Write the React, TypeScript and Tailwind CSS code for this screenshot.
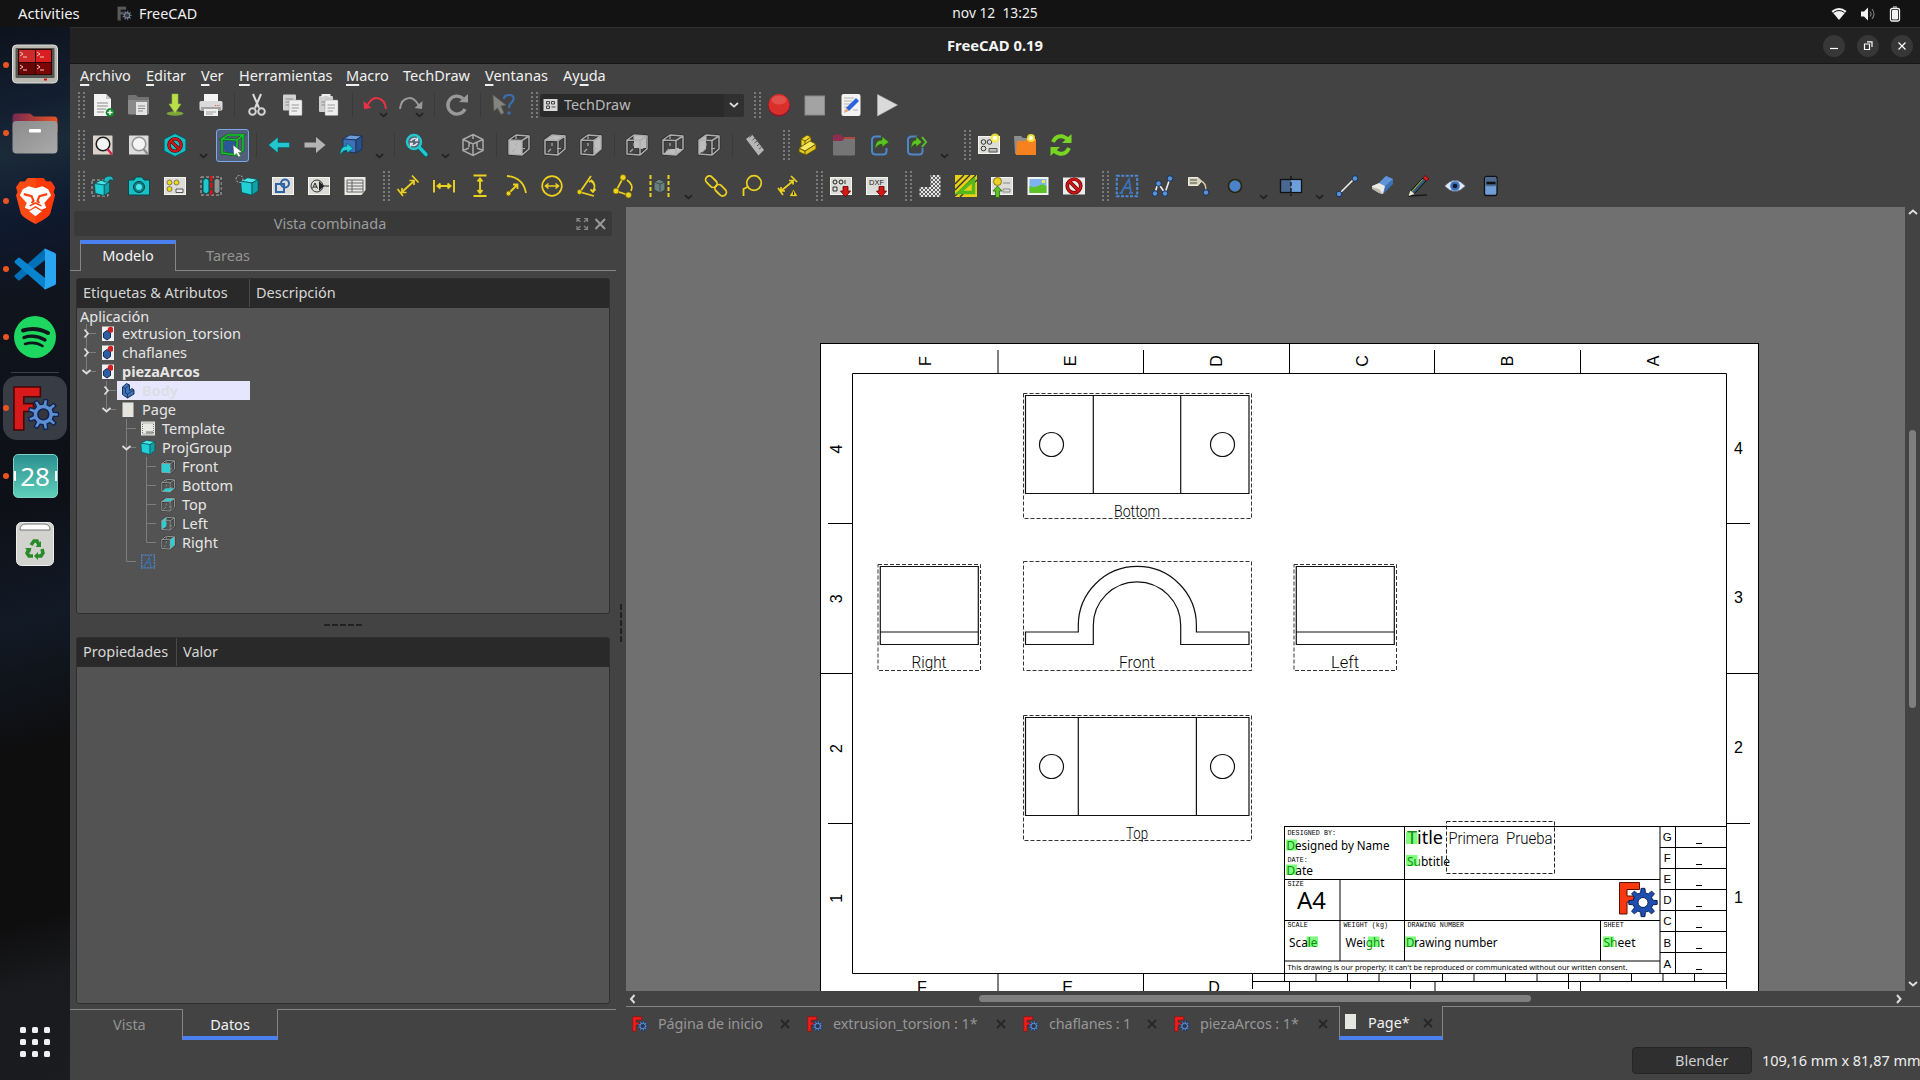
import React from "react";

type P = { children?: React.ReactNode };

/* ---------- shared drawing helpers ---------- */

function gearPath(cx: number, cy: number, r: number, R: number, teeth: number) {
  const pts: string[] = [];
  const step = (Math.PI * 2) / teeth;
  for (let i = 0; i < teeth; i++) {
    const a = i * step;
    const spots: [number, number][] = [
      [-0.3, r],
      [-0.17, R],
      [0.17, R],
      [0.3, r],
    ];
    for (const [o, q] of spots) {
      const t = a + o * step;
      pts.push(`${(cx + q * Math.cos(t)).toFixed(2)} ${(cy + q * Math.sin(t)).toFixed(2)}`);
    }
  }
  return "M" + pts.join("L") + "Z";
}

const FreeCadMark = ({ className, red = "#d81a1a", blue = "#5b8fd0", edge = "#4a0505" }: { className: string; red?: string; blue?: string; edge?: string }) => (
  <svg viewBox="0 0 48 48" className={className}>
    <path d="M2 2H29V12H12V19H22V27H12V46H2Z" fill={red} stroke={edge} strokeWidth="1.600" />
    <path d={gearPath(32, 30, 10.5, 15.5, 9)} fill={blue} stroke="#10204f" strokeWidth="1.400" />
    <circle cx="32" cy="30" r="5.500" fill="#35373c" stroke="#10204f" strokeWidth="1.600" />
  </svg>
);

const S = ({ children }: P) => (
  <svg viewBox="0 0 24 24" className="h-6 w-6 overflow-visible" fill="none">
    {children}
  </svg>
);

const Chev = () => (
  <svg viewBox="0 0 10 6" className="h-[6px] w-[9px]" fill="none">
    <path d="M1 1L5 4.600L9 1" stroke="#222" strokeWidth="1.900" />
  </svg>
);

/* ---------- cube family ---------- */

const cubeFaces: Record<string, string> = {
  front: "M2 7H15V22L2 21Z",
  top: "M2 7L9 2H22L15 7Z",
  right: "M15 7L22 2V16L15 22Z",
  rear: "M9 3H21V15H9Z",
  bottom: "M2 21L9 16H22L15 22Z",
  left: "M2 7L9 2V16L2 21Z",
};

const Cube = ({ face, line = "#adadad", fill = "#bdbdbd" }: { face: string; line?: string; fill?: string }) => (
  <>
    <path d="M2 7L15 7.500V22L2 21ZM2 7L9 2L22 3L15 7.500M22 3V16L15 22" stroke="#2e2e2e" strokeWidth="2.800" strokeLinejoin="round" />
    <path d={cubeFaces[face]} fill={fill} />
    <path d="M9 3V6M9 10V13M8 16L5 19M14 15.500H18" stroke={line} strokeWidth="1.200" />
    <path d="M2 7L15 7.500V22L2 21ZM2 7L9 2L22 3L15 7.500M22 3V16L15 22" stroke={line} strokeWidth="1.500" strokeLinejoin="round" />
  </>
);

const TealCube = ({ x = 0, y = 0, s = 1 }: { x?: number; y?: number; s?: number }) => (
  <g transform={`translate(${x} ${y}) scale(${s})`} stroke="#06484c" strokeWidth="0.800" strokeLinejoin="round">
    <path d="M2 6L10 2L22 4L15 8Z" fill="#4ae6ea" />
    <path d="M2 6L15 8V22L3 19Z" fill="#20d0d6" />
    <path d="M15 8L22 4V17L15 22Z" fill="#0ea2a8" />
  </g>
);

const Sheet = ({ children }: P) => (
  <>
    <rect x="1.500" y="3.500" width="21" height="17" fill="#dcdcd8" stroke="#f3f3f0" strokeWidth="1" />
    {children}
  </>
);

const Banned = () => (
  <>
    <circle cx="12" cy="12" r="7.500" stroke="#4a0000" strokeWidth="4" />
    <path d="M7 7L17 17" stroke="#4a0000" strokeWidth="4" />
    <circle cx="12" cy="12" r="7.500" stroke="#d31414" strokeWidth="2.600" />
    <path d="M6.800 6.800L17.200 17.200" stroke="#d31414" strokeWidth="2.600" />
  </>
);

const Y = "#ecd11f";
const Dot = ({ x, y, r = 2.4 }: { x: number; y: number; r?: number }) => <circle cx={x} cy={y} r={r} fill={Y} stroke="#5c4f05" strokeWidth="0.600" />;
const BDot = ({ x, y, r = 2.8 }: { x: number; y: number; r?: number }) => <circle cx={x} cy={y} r={r} fill="#5890d4" stroke="#15315c" strokeWidth="1" />;

const Magnifier = ({ c, h, bg }: { c: string; h: string; bg: string }) => (
  <>
    <rect x="2" y="2.500" width="19.500" height="19" rx="0.500" fill={bg} />
    <circle cx="12" cy="11" r="6.800" fill="#f4f4f4" stroke={c} strokeWidth="1.500" />
    <path d="M16.500 16L21 21.500" stroke={h} strokeWidth="2.400" />
  </>
);

const Dxf = ({ children }: P) => (
  <>
    <Sheet>{children}</Sheet>
    <path d="M14 12.500H19V17H21.500L16.500 23L11.500 17H14Z" fill="#d41717" stroke="#5c0000" strokeWidth="0.800" />
  </>
);

const Exchange = () => <path d="M13 3.500H8Q4 3.500 4 7V18Q4 21.500 8 21.500H15Q18.500 21.500 18.500 18V15" stroke="#4d87c9" strokeWidth="2" />;

const icons: Record<string, React.ReactNode> = {
  newdoc: (
    <>
      <path d="M4 1H15L20 6V23H3V1Z" fill="#f2f2f2" />
      <path d="M15 1V6H20Z" fill="#c4c4c4" />
      <path d="M6 10H17M6 13H17M6 16H15M6 19H13" stroke="#8c8c8c" strokeWidth="1" />
      <circle cx="19" cy="19.500" r="4.300" fill="#13862c" />
      <path d="M19 17V22M16.500 19.500H21.500" stroke="#fff" strokeWidth="1.300" />
    </>
  ),
  open: (
    <>
      <path d="M1 3Q1 2 2 2H9L11 4H21Q22 4 22 5V20Q22 21 21 21H2Q1 21 1 20Z" fill="#727272" />
      <path d="M1 7H22V20Q22 21.500 20.500 21.500H2.500Q1 21.500 1 20Z" fill="#8a8a8a" />
      <path d="M9 9H20V22H9Z" fill="#e4e4e4" />
      <path d="M11 13H18M11 15.500H18M11 18H16" stroke="#8c8c8c" />
    </>
  ),
  save: (
    <>
      <ellipse cx="12" cy="20.500" rx="8.500" ry="2.200" fill="#7da53a" />
      <path d="M9 1H15V11H18L12 20L6 11H9Z" fill="#b9e04a" stroke="#95bb33" strokeWidth="0.600" />
    </>
  ),
  print: (
    <>
      <path d="M5 1H19V9H5Z" fill="#f4f4f4" />
      <rect x="0.500" y="8" width="23" height="9.500" rx="1.500" fill="#dadada" />
      <path d="M2 14H22V18H2Z" fill="#a3a3a3" />
      <path d="M5 16H19V23H5Z" fill="#f1f1f1" />
      <path d="M7 19H17M7 21H14" stroke="#9c9c9c" />
      <path d="M16 12.500H21" stroke="#d55" strokeDasharray="1.200 1" />
    </>
  ),
  cut: (
    <>
      <path d="M8 1L14 15M16 1L10 15" stroke="#dcdcdc" strokeWidth="2" />
      <circle cx="7.500" cy="18.500" r="3.300" stroke="#d4d4d4" strokeWidth="2" />
      <circle cx="16.500" cy="18.500" r="3.300" stroke="#d4d4d4" strokeWidth="2" />
    </>
  ),
  copy: (
    <>
      <rect x="2" y="1.500" width="13" height="16" rx="1" fill="#d2d2d2" />
      <path d="M4.500 6H12M4.500 9H8M4.500 12H8" stroke="#8d8d8d" />
      <rect x="8" y="7" width="13" height="15.500" rx="1" fill="#efefef" stroke="#999" strokeWidth="0.500" />
      <path d="M10.500 12H18M10.500 15H18M10.500 18H16" stroke="#9a9a9a" />
    </>
  ),
  paste: (
    <>
      <rect x="2" y="3" width="14" height="16" rx="1" fill="#cfcfcf" />
      <path d="M5.500 4V2H12.500V4" stroke="#eee" strokeWidth="2" />
      <path d="M4.500 9H8M4.500 12H8" stroke="#8d8d8d" />
      <rect x="8" y="7" width="13" height="15.500" rx="1" fill="#efefef" stroke="#999" strokeWidth="0.500" />
      <path d="M10.500 12H18M10.500 15H18M10.500 18H16" stroke="#9a9a9a" />
    </>
  ),
  undo: (
    <>
      <path d="M4.500 12Q9 4 14 5Q22 6 23 16" stroke="#e93246" strokeWidth="2" />
      <path d="M0.500 8L1 16L8.500 15Z" fill="#e93246" />
    </>
  ),
  redo: (
    <>
      <path d="M19.500 12Q15 4 10 5Q2 6 1 16" stroke="#9a9a9a" strokeWidth="2" />
      <path d="M23.500 8L23 16L15.500 15Z" fill="#9a9a9a" />
    </>
  ),
  refresh: (
    <>
      <path d="M20 16A9 9 0 1 1 18 5.500" stroke="#999" strokeWidth="3.400" />
      <path d="M14 9L23 9.500V1Z" fill="#999" />
    </>
  ),
  whats: (
    <>
      <path d="M2 2L15 12L10 13L13 20L10 21.500L6.500 15L3 18Z" fill="#858580" stroke="#5c5c58" strokeWidth="0.800" />
      <path d="M13 6Q13 2 18 2Q23 2 22.500 6Q22 9 19.500 10.500Q18 12 18 15" stroke="#3a6fae" strokeWidth="2.200" />
      <circle cx="18" cy="20" r="1.700" fill="#3a6fae" />
    </>
  ),
  record: (
    <>
      <circle cx="12" cy="12.500" r="11" fill="#8d1532" />
      <circle cx="12" cy="11.500" r="10.500" fill="#d9302c" />
      <ellipse cx="12" cy="7" rx="7.500" ry="4.500" fill="#ec6b63" opacity="0.500" />
    </>
  ),
  stop: <rect x="2" y="3" width="19.500" height="19" fill="#a3a3a3" stroke="#8a8a8a" />,
  edit: (
    <>
      <rect x="2.500" y="1" width="19" height="22" rx="2" fill="#f3f3f3" />
      <path d="M5 5H15M5 8H13M5 11H12M5 14H9M14 17H19M5 18H8" stroke="#b7b0a6" />
      <path d="M17 5L20 8L10 18L7 15Z" fill="#2c62dd" />
      <path d="M7 15L10 18L5 20Z" fill="#e3a97a" />
    </>
  ),
  play: <path d="M2.500 1.500L22.500 12L2.500 23Z" fill="#dadada" stroke="#bcbcbc" strokeWidth="0.500" />,
  fitall: <Magnifier c="#1c1c1c" h="#d6274a" bg="#d9d3ca" />,
  fitsel: <Magnifier c="#949494" h="#8e8e8e" bg="#dcdcdc" />,
  drawstyle: (
    <>
      <path d="M12 0.500L23 6V18L12 23.500L1 18V6Z" fill="#18bcc4" stroke="#07575c" />
      <g transform="translate(2.200 2.200) scale(0.820)">
        <Banned />
      </g>
    </>
  ),
  bbox: (
    <>
      <circle cx="11" cy="13" r="7.500" fill="#2c5796" />
      <path d="M2 6L8 2H23L17 7ZM2 6V20L17 22V7M23 2V17L17 22" stroke="#0a5c14" strokeWidth="2.600" />
      <path d="M2 6L8 2H23L17 7ZM2 6V20L17 22V7M23 2V17L17 22" stroke="#16c92c" strokeWidth="1.500" />
      <path d="M13 12L22 19L18.500 19.500L20.500 23L18.500 24L16.500 20.500L14 22.500Z" fill="#fff" stroke="#555" strokeWidth="0.500" />
    </>
  ),
  left: <path d="M1.500 12L11 4V9.500H22.500V14.500H11V20Z" fill="#21c7cd" stroke="#07575c" strokeWidth="0.500" />,
  right: <path d="M22.500 12L13 4V9.500H1.500V14.500H13V20Z" fill="#b4b4b4" />,
  linkview: (
    <>
      <path d="M4 6L11 2L23 3L17 7Z" fill="#6c9bd6" stroke="#122d55" strokeWidth="0.800" />
      <path d="M4 6L17 7V20L4 18Z" fill="#3d70b5" stroke="#122d55" strokeWidth="0.800" />
      <path d="M17 7L23 3V16L17 20Z" fill="#28508a" stroke="#122d55" strokeWidth="0.800" />
      <path d="M1 22Q1 13 8 13V10L14 15.500L8 20V17Q4 17 1 22Z" fill="#20d0d6" stroke="#07575c" strokeWidth="0.600" />
    </>
  ),
  search: (
    <>
      <path d="M14 14L21 21.500" stroke="#07575c" strokeWidth="5" strokeLinecap="round" />
      <path d="M14 14L21 21.500" stroke="#20c8ce" strokeWidth="3.400" strokeLinecap="round" />
      <circle cx="9" cy="9" r="7" fill="#567" stroke="#20c8ce" strokeWidth="2.400" />
      <path d="M5.500 8Q9 3.500 12.500 7M12.500 10Q9 14.500 5.500 11M12.500 4.500V7.500H10M5.500 13.500V10.500H8" stroke="#e6e6e6" strokeWidth="1.300" />
    </>
  ),
  iso: (
    <path d="M12 1.500L22 6.500V17.500L12 22.500L2 17.500V6.500ZM2 6.500L12 11L22 6.500M12 11V22.500M12 1.500V6M2 17.500L8 15M22 17.500L16 15M8 10V14M16 10V14" stroke="#a9a9a9" strokeWidth="1.500" />
  ),
  front: <Cube face="front" />,
  top: <Cube face="top" />,
  rightv: <Cube face="right" />,
  rear: <Cube face="rear" />,
  bottom: <Cube face="bottom" />,
  leftv: <Cube face="left" />,
  ruler: (
    <>
      <path d="M3 6L9 1.500L21 17L15.500 22.500Z" fill="#b5b5b5" />
      <path d="M9 2L6.500 4.500M12 5L9.500 7M14 8L11.500 10M16.500 11L14 13M18.500 14L16 16" stroke="#555" />
    </>
  ),
  part: (
    <g stroke="#5f5003" strokeWidth="0.900" strokeLinejoin="round">
      <path d="M5 6L11 2L15 4V11L9 15L5 13Z" fill="#edd32a" />
      <path d="M5 6L9 8L15 4M9 8V15" />
      <path d="M3 15L9 18L20 11V16L10 22L3 19Z" fill="#e2c61e" />
      <path d="M3 15L14 8L20 11L9 18Z" fill="#f9e85c" />
      <path d="M9 18V22" />
    </g>
  ),
  folder: (
    <>
      <path d="M1 3Q1 1.500 2.500 1.500H9L11 4H21Q23 4 23 6V10H1Z" fill="#8f2d4f" />
      <path d="M12 4H23V8H12Z" fill="#b5483d" />
      <path d="M1 8H10L12 6H23V21Q23 22.500 21.500 22.500H2.500Q1 22.500 1 21Z" fill="#757575" />
    </>
  ),
  link: (
    <>
      <Exchange />
      <path d="M7 16Q7 7 14 7V3.500L21 9L14 14V11Q10 11 7 16Z" fill="#5cc226" stroke="#235a05" strokeWidth="0.600" />
    </>
  ),
  links: (
    <>
      <Exchange />
      <path d="M7 16Q7 7 12 7V3.500L18 9L12 14V11Q9 11 7 16Z" fill="#5cc226" stroke="#235a05" strokeWidth="0.600" />
      <path d="M18 4L22 9L18 14" stroke="#5cc226" strokeWidth="2" />
    </>
  ),
  page: (
    <>
      <Sheet>
        <circle cx="6.500" cy="9" r="2.300" stroke="#333" />
        <circle cx="12.500" cy="9" r="2.300" stroke="#333" />
        <circle cx="6.500" cy="15.500" r="2.300" stroke="#333" />
        <path d="M12 15.500H20V19H12Z" stroke="#555" fill="#bbb" />
      </Sheet>
      <circle cx="18" cy="5" r="4.500" fill="#f6ec3c" opacity="0.900" />
      <circle cx="18" cy="5" r="2.300" fill="#fffde0" />
    </>
  ),
  pagefolder: (
    <>
      <path d="M1 3H8L10 5H20V21H2Z" fill="#8d8d8d" />
      <path d="M4 8H12L14 6H23V22H3Z" fill="#f5821f" />
      <circle cx="18" cy="5" r="4" fill="#f6ec3c" opacity="0.900" />
      <circle cx="18" cy="5" r="2" fill="#fffde0" />
    </>
  ),
  sync: (
    <>
      <path d="M4 9Q7 2 14 3.500Q18 5 19 7" stroke="#78d622" strokeWidth="4" />
      <path d="M13 10H22.500V1Z" fill="#78d622" />
      <path d="M20 15Q17 22 10 20.500Q6 19 5 17" stroke="#78d622" strokeWidth="4" />
      <path d="M11 14H1.500V23Z" fill="#78d622" />
    </>
  ),
  view: (
    <>
      <rect x="1" y="6" width="16" height="16" stroke="#bbb" strokeDasharray="3 2" />
      <TealCube x={2} y={5} s={0.75} />
      <path d="M13 8Q12 2 19 2Q23 3 22 7Q19 4 17 8Z" fill="#20b8be" stroke="#06484c" strokeWidth="0.700" />
    </>
  ),
  camera: (
    <>
      <path d="M1.500 6H7L9 3H15L17 6H22.500V21H1.500Z" fill="#18c0c6" stroke="#06484c" />
      <circle cx="12" cy="13" r="5.500" fill="#0f8288" stroke="#043a3d" />
      <circle cx="12" cy="13" r="3" fill="#49e3e8" />
    </>
  ),
  tdpage: (
    <Sheet>
      <circle cx="6.500" cy="8.500" r="2.500" fill="#f0d714" stroke="#555" strokeWidth="0.700" />
      <circle cx="13.500" cy="8.500" r="2.500" fill="#f0d714" stroke="#555" strokeWidth="0.700" />
      <circle cx="6.500" cy="15" r="2.500" fill="#f0d714" stroke="#555" strokeWidth="0.700" />
      <path d="M13 15H20V18.500H13Z" stroke="#555" fill="#eee" />
    </Sheet>
  ),
  section: (
    <>
      <path d="M2 3H22V21H2Z" stroke="#bbb" strokeDasharray="3 2" />
      <path d="M4 6L7 4L10 6V18L7 20L4 18Z" fill="#20c8ce" stroke="#06484c" />
      <path d="M15 6L18 4L21 6V18L18 20L15 18Z" fill="#8c9694" stroke="#333" />
      <path d="M12.300 2V22" stroke="#d41414" strokeWidth="2.500" strokeDasharray="5 2" />
    </>
  ),
  detail: (
    <>
      <TealCube x={4} y={2} s={0.87} />
      <circle cx="4.500" cy="5" r="3.500" stroke="#bbb" strokeDasharray="2 1.500" />
    </>
  ),
  draft: (
    <Sheet>
      <path d="M5 10H13V18H5Z" stroke="#2f63a8" strokeWidth="2" />
      <circle cx="14" cy="9.500" r="4" stroke="#2f63a8" strokeWidth="2" />
    </Sheet>
  ),
  arch: (
    <Sheet>
      <circle cx="10" cy="12" r="6" stroke="#333" />
      <path d="M12 7L17 12L12 17Z" fill="#222" />
      <path d="M16 12H22M5.500 14.500L8 9L10.500 14.500M6.500 13H10" stroke="#222" />
    </Sheet>
  ),
  sheet: (
    <>
      <path d="M1.500 3H22.500V16L18.500 21H1.500Z" fill="#e9e9e6" />
      <path d="M4 6H20V18H4ZM4 9H20M4 12H20M4 15H20M9 6V18" stroke="#666" />
    </>
  ),
  dlen: <path d="M6 18L18 7M6 14V18.500H10.500M13.500 6.500H18V11M1.500 15L7 22M16 1.500L22.500 8.500" stroke={Y} strokeWidth="1.700" />,
  dhor: <path d="M2 6V18.500M22 6V18.500M6 12H18M8.500 9.500L5.500 12L8.500 14.500M15.500 9.500L18.500 12L15.500 14.500" stroke={Y} strokeWidth="1.900" />,
  dver: <path d="M5.500 1.500H18.500M5.500 22H18.500M12 5V18M9.500 7.500L12 4.500L14.500 7.500M9.500 16L12 19L14.500 16" stroke={Y} strokeWidth="1.900" />,
  drad: (
    <>
      <path d="M3 2Q19 3 22 19M5 19L13 11M9 10.500H13.500V15" stroke={Y} strokeWidth="1.800" />
      <Dot x={4.5} y={19.5} />
    </>
  ),
  ddia: (
    <>
      <circle cx="12" cy="12" r="9.800" stroke={Y} strokeWidth="1.700" />
      <path d="M6 12H18M8.500 9.500L5.500 12L8.500 14.500M15.500 9.500L18.500 12L15.500 14.500" stroke={Y} strokeWidth="1.600" />
    </>
  ),
  dang: (
    <>
      <path d="M15 2L4 18L18 22M15 7Q21 11 17 17M13 8L15.500 6.500L18 9M14.500 15.500L17 18L19.500 15" stroke={Y} strokeWidth="1.800" />
      <Dot x={3.5} y={18} />
    </>
  ),
  dang3: (
    <>
      <path d="M11 4L4 17L16 21M15 6Q22 11 19 17" stroke={Y} strokeWidth="1.700" />
      <Dot x={11} y={3.5} r={3} />
      <Dot x={4} y={17} r={3} />
      <Dot x={16.5} y={21} r={3} />
    </>
  ),
  dext: (
    <>
      <path d="M2.500 1V23M20.500 1V23" stroke={Y} strokeWidth="2" strokeDasharray="4 2" />
      <path d="M6 8L11 5L17 8V16L12 19L6 16Z" fill="#69807f" stroke="#2f3a3a" />
      <path d="M6 8L12 10L17 8M12 10V19" stroke="#3e4e4e" />
    </>
  ),
  chain: (
    <>
      <rect x="1" y="4" width="13" height="7.500" rx="3.700" transform="rotate(45 7.500 7.500)" stroke={Y} strokeWidth="1.800" />
      <rect x="10" y="12.500" width="13" height="7.500" rx="3.700" transform="rotate(45 16.500 16.500)" stroke={Y} strokeWidth="1.800" />
    </>
  ),
  balloon: (
    <>
      <circle cx="14" cy="9" r="7.300" stroke={Y} strokeWidth="1.700" />
      <path d="M7.500 13L3.500 15V22" stroke={Y} strokeWidth="1.800" />
    </>
  ),
  landmark: (
    <>
      <path d="M5 17L17 7M5 13V17H9M13 6.500H17V10.500M2 14L7 21M15 2L21 8" stroke={Y} strokeWidth="1.700" />
      <path d="M17.500 15L22 22.500H13Z" fill={Y} stroke="#333" strokeWidth="0.700" />
      <path d="M17.500 17.500V21" stroke="#222" strokeWidth="1.200" />
    </>
  ),
  expsvg: (
    <Dxf>
      <circle cx="6" cy="8" r="2" stroke="#222" />
      <circle cx="12" cy="8" r="2" stroke="#222" />
      <path d="M4 13H8V17H4ZM16 6V10" stroke="#333" />
    </Dxf>
  ),
  expdxf: (
    <Dxf>
      <text x="4" y="11" fontSize="7.500" fill="#222" fontFamily="Liberation Sans" textLength="15">DXF</text>
    </Dxf>
  ),
  hatch: (
    <>
      <defs>
        <pattern id="hex" width="4" height="4" patternUnits="userSpaceOnUse">
          <rect width="4" height="4" fill="#e2e2e2" />
          <path d="M0 0L4 4M4 0L0 4" stroke="#444" strokeWidth="0.800" />
        </pattern>
      </defs>
      <path d="M12.500 1H22.500V23H1.500V13H12.500Z" fill="url(#hex)" />
    </>
  ),
  geohatch: (
    <>
      <rect x="1" y="1" width="22" height="22" fill="#e8cf18" />
      <path d="M1 10L10 1M1 16L16 1M1 22L22 1M6 23L23 6" stroke="#333" strokeWidth="1.400" />
      <path d="M5 18.500H19.500V6Z" stroke="#55b81c" strokeWidth="3.400" fill="#e8cf18" />
    </>
  ),
  symbol: (
    <>
      <Sheet>
        <path d="M13 15H20V18H13ZM13 9H20" stroke="#888" />
      </Sheet>
      <circle cx="7.500" cy="7.500" r="4" fill="#ecd11f" stroke="#6e5e05" strokeWidth="0.800" />
      <path d="M5.500 23.500V17H3L7.500 12L12 17H9.500V23.500Z" fill="#5cc226" stroke="#235a05" strokeWidth="0.700" />
    </>
  ),
  image: (
    <>
      <rect x="1.500" y="3" width="21" height="18" fill="#f2f2f2" />
      <rect x="3.500" y="5" width="17" height="14" fill="#7db4f0" />
      <path d="M3.500 12Q8 14 12 12Q16 9 20.500 12V19H3.500Z" fill="#5cc226" />
      <circle cx="17.500" cy="7.500" r="1.800" fill="#f6ec3c" />
    </>
  ),
  noframe: (
    <>
      <rect x="1" y="3.500" width="22" height="17" fill="#ececec" />
      <g transform="translate(1.200 1.200) scale(0.900)">
        <Banned />
      </g>
    </>
  ),
  annot: (
    <>
      <rect x="1.800" y="1.800" width="20.400" height="20.400" stroke="#4d8ad6" strokeWidth="2" strokeDasharray="3 1.500" />
      <path d="M6 19L14 5.500L16 19M9 14H15.500M4.500 19H8M14 19H18" stroke="#3a70b4" strokeWidth="1.800" />
    </>
  ),
  poly: (
    <>
      <path d="M4 19L7 9L14 19L19 4" stroke="#eee" strokeWidth="1.600" />
      <BDot x={4} y={19.5} />
      <BDot x={7.5} y={9.5} />
      <BDot x={14} y={19.5} />
      <BDot x={19} y={4.5} />
    </>
  ),
  leader: (
    <>
      <path d="M1.500 3.500H11L14.500 7L11 11.500H1.500Z" fill="#d8d3c0" stroke="#f0ecdc" />
      <path d="M3 6H10M3 9H10" stroke="#4c4a40" />
      <path d="M14 7Q19 9 19 16" stroke="#d8c9a0" strokeWidth="1.400" />
      <BDot x={19} y={18.5} />
    </>
  ),
  vertex: <circle cx="12" cy="12" r="6.500" fill="#4b82c8" stroke="#2a2508" strokeWidth="1.600" />,
  centerline: (
    <>
      <rect x="1.500" y="5.500" width="21" height="13" fill="#48688f" stroke="#111" strokeWidth="1.300" />
      <rect x="12" y="6.200" width="9.800" height="11.600" fill="#6c9fdb" />
      <path d="M12 2V22" stroke="#111" strokeWidth="1.300" strokeDasharray="4 2" />
    </>
  ),
  line: (
    <>
      <path d="M4 20L20 4" stroke="#eee" strokeWidth="1.600" />
      <BDot x={4} y={20} />
      <BDot x={20} y={4.5} />
    </>
  ),
  erase: (
    <>
      <path d="M8 9L15 2L22 5V10L12 20Z" fill="#3c72b8" />
      <path d="M8 9L15 2L22 5L14 12Z" fill="#5f94d6" />
      <path d="M1 12L8 9L14 12L12 20L8 19L1 14Z" fill="#eceae4" />
      <path d="M1 13L8 15L12 20L8 19L1 15Z" fill="#bdbab2" />
    </>
  ),
  pencil: (
    <>
      <path d="M1 22L20 21" stroke="#1a1a1a" strokeWidth="1.500" />
      <path d="M16 4L19 7L7 20L3.500 17Z" fill="#2d5a78" stroke="#111" />
      <path d="M15.500 5.500L5 17.500" stroke="#c9b11a" />
      <path d="M16 4L18 1.500L22 5L19 7Z" fill="#d42020" stroke="#400" strokeWidth="0.600" />
      <path d="M3.500 16.500L7.500 20L1.500 22Z" fill="#f1ead2" />
    </>
  ),
  eye: (
    <>
      <path d="M1.500 12Q12 0.500 22.500 12Q12 23 1.500 12Z" fill="#dfe7f3" stroke="#2a3f5c" strokeWidth="0.600" />
      <circle cx="12" cy="12" r="4.800" fill="#3d70b8" />
      <circle cx="12" cy="12" r="2.300" fill="#0c1a33" />
    </>
  ),
  props: (
    <>
      <rect x="5.500" y="2.500" width="12.500" height="19" rx="2" fill="#6f9fd6" stroke="#111" strokeWidth="1.300" />
      <rect x="6.200" y="3.200" width="11.100" height="9" rx="1.500" fill="#4e6b8d" />
      <path d="M7.500 9H16.500" stroke="#111" strokeWidth="2.600" />
    </>
  ),
};

/* ---------- toolbars ---------- */

const Grip = ({ tall = true, lead = true }: { tall?: boolean; lead?: boolean }) => (
  <div className={`flex w-2 shrink-0 justify-center gap-[3px] ${lead ? "ml-[9px]" : ""}`}>
    <i className={`w-[2px] bg-[repeating-linear-gradient(to_bottom,#7b7b7b_0_2px,transparent_2px_4px)] ${tall ? "h-[30px]" : "h-[26px]"}`} />
    <i className={`w-[2px] bg-[repeating-linear-gradient(to_bottom,#7b7b7b_0_2px,transparent_2px_4px)] ${tall ? "h-[30px]" : "h-[26px]"}`} />
  </div>
);

const Items = ({ names }: { names: string }) => (
  <>
    {names.split(" ").map((n, i) => {
      if (n === "|")
        return (
          <div key={i} className="flex w-[10px] shrink-0 justify-center">
            <div className="h-6 w-px bg-[#3a3a3a]" />
          </div>
        );
      if (n === "v")
        return (
          <div key={i} className="flex h-[30px] w-5 shrink-0 items-end justify-center pb-[1px]">
            <Chev />
          </div>
        );
      if (n === "bbox")
        return (
          <div key={i} className="mx-[2.5px] flex h-[33px] w-[33px] shrink-0 items-center justify-center rounded-[3px] border border-[#7aa7f0] bg-[#515f78]">
            <S>{icons[n]}</S>
          </div>
        );
      return (
        <div key={i} className="relative flex w-9 shrink-0 items-center justify-center">
          <S>{icons[n]}</S>
          {(n === "undo" || n === "redo") && (
            <div className="absolute -bottom-px left-[22px]">
              <Chev />
            </div>
          )}
        </div>
      );
    })}
  </>
);

const menus: [string, string, string, string][] = [
  ["", "A", "rchivo", "w-[66px]"],
  ["", "E", "ditar", "w-[55px]"],
  ["", "V", "er", "w-[38px]"],
  ["", "H", "erramientas", "w-[107px]"],
  ["", "M", "acro", "w-[57px]"],
  ["TechDraw", "", "", "w-[82px]"],
  ["", "V", "entanas", "w-[78px]"],
  ["Ay", "u", "da", "w-[60px]"],
];

const Toolbars = () => (
  <div className="flex h-[143px] shrink-0 flex-col">
    <div className="flex h-6 items-center pl-[10px] text-[14.5px] text-[#f0f0f0]">
      {menus.map(([a, u, b, w], i) => (
        <span key={i} className={`whitespace-nowrap ${w}`}>
          {a}
          <span className="underline decoration-[1.5px] underline-offset-[3px]">{u}</span>
          {b}
        </span>
      ))}
    </div>
    <div className="flex h-[34px] items-center pl-[7px]">
      <Grip lead={false} tall={false} />
      <Items names="newdoc open save print | cut copy paste | undo redo | refresh | whats" />
      <Grip tall={false} />
      <div className="ml-[2px] flex h-[23px] w-[204px] items-center rounded-[3px] bg-[#2a2a2a] pl-[3px] text-[14.4px] text-[#b9b9b9]">
        <svg viewBox="0 0 14 12" className="h-[12px] w-[15px]">
          <rect width="14" height="12" fill="#d8d8d8" />
          <path d="M3 2.500H6V5H3ZM8 2.500H11V5H8ZM3 7H6V9.500H3ZM8 8H12" stroke="#444" fill="none" />
        </svg>
        <span className="ml-[6px] flex-1">TechDraw</span>
        <div className="flex h-full w-5 items-center justify-center rounded-r-[3px] bg-[#303030]">
          <svg viewBox="0 0 10 6" className="h-[6px] w-[10px]" fill="none">
            <path d="M1 1L5 4.600L9 1" stroke="#ddd" strokeWidth="1.800" />
          </svg>
        </div>
      </div>
      <Grip tall={false} />
      <Items names="record stop edit play" />
    </div>
    <div className="flex h-[46px] items-center pl-[7px]">
      <Grip lead={false} />
      <Items names="fitall fitsel drawstyle v bbox | left right linkview v | search v iso | front top rightv | rear bottom leftv | ruler" />
      <Grip />
      <Items names="part folder link links v" />
      <Grip />
      <Items names="page pagefolder sync" />
    </div>
    <div className="flex h-9 items-center pl-[7px]">
      <Grip lead={false} />
      <Items names="view camera tdpage section detail draft arch sheet" />
      <Grip />
      <Items names="dlen dhor dver drad ddia dang dang3 dext v chain balloon landmark" />
      <Grip />
      <Items names="expsvg expdxf" />
      <Grip />
      <Items names="hatch geohatch symbol image noframe" />
      <Grip />
      <Items names="annot poly leader vertex v centerline v line erase pencil eye props" />
    </div>
  </div>
);

/* ---------- dock ---------- */

const DockSlot = ({ children, dot = true, active = false }: P & { dot?: boolean; active?: boolean }) => (
  <div className="flex h-[68px] w-[70px] shrink-0 items-center">
    <div className={`ml-[3px] flex h-16 w-16 items-center rounded-[14px] ${active ? "bg-[#383c45]" : ""}`}>
      <i className={`h-[6px] w-[6px] rounded-full ${dot ? "bg-[#e95420]" : ""}`} />
      <div className="flex flex-1 items-center justify-center pr-[6px]">{children}</div>
    </div>
  </div>
);

const Dock = () => (
  <div className="flex w-[70px] shrink-0 flex-col bg-[linear-gradient(165deg,#0d131d_0%,#131f30_8%,#1b2a38_12%,#0f1a30_18%,#10141d_26%,#0e1017_45%,#121a26_56%,#0e0e0f_68%,#0e0e0f_84%,#191a1d_90%,#1b1c1f_100%)] pt-1">
    <DockSlot>
      <svg viewBox="0 0 46 42" className="h-[42px] w-[46px]">
        <rect x="0.500" y="1" width="45" height="38" rx="4" fill="#b9b9b2" stroke="#ddd" />
        <rect x="3.500" y="4" width="39" height="30" rx="1" fill="#55554f" />
        <rect x="6" y="5" width="34" height="26" fill="#2c0505" />
        <rect x="7" y="6" width="16" height="12" fill="#cf2a2a" />
        <rect x="24" y="6" width="15" height="12" fill="#d81e1e" />
        <rect x="7" y="19" width="16" height="11" fill="#6a0606" />
        <rect x="24" y="19" width="15" height="11" fill="#7c0606" />
        <path d="M8 8L11 10L8 12M11 13H15M25 8L28 10L25 12M28 13H32M8 21L11 23L8 25M11 26H15M25 21L28 23L25 25M28 26H32" stroke="#f5c6c6" fill="none" />
        <rect x="32" y="34.500" width="3" height="2" fill="#e01010" />
      </svg>
    </DockSlot>
    <DockSlot>
      <svg viewBox="0 0 46 42" className="h-[42px] w-[46px]">
        <defs>
          <linearGradient id="fo" x1="0" x2="1">
            <stop offset="0" stopColor="#772953" />
            <stop offset="1" stopColor="#e95420" />
          </linearGradient>
          <linearGradient id="fg" x1="0" x2="1" y1="0" y2="1">
            <stop offset="0" stopColor="#8b8b8b" />
            <stop offset="1" stopColor="#aaa" />
          </linearGradient>
        </defs>
        <path d="M0.500 5Q0.500 1.500 4 1.500H18L22 4.500H42Q45.500 4.500 45.500 8V20H0.500Z" fill="url(#fo)" />
        <rect x="0.500" y="9" width="45" height="32.500" rx="4" fill="url(#fg)" />
        <rect x="17" y="17" width="12" height="3.500" rx="1" fill="#fff" />
      </svg>
    </DockSlot>
    <DockSlot>
      <svg viewBox="0 0 42 48" className="h-[48px] w-[41px]">
        <path d="M10 4L13 0.500H29L32 4L37 4L41 10L39.500 15L41 18L36 37Q34 41 21 47.500Q8 41 6 37L1 18L2.500 15L1 10L5 4Z" fill="#fb4a14" />
        <path d="M21 0.500H29L32 4L37 4L41 10L39.500 15L41 18L36 37Q34 41 21 47.500Z" fill="#ff2a00" opacity="0.550" />
        <path d="M21 11L28 9L34 12L37 18L30 26L32 31L27 33L21 29L15 33L10 31L12 26L5 18L8 12L14 9Z" fill="#fff" />
        <path d="M9 17L17 19L19 24L17 26M33 17L25 19L23 24L25 26" stroke="#fb3f12" strokeWidth="2.200" fill="none" />
        <path d="M15 29L21 26L27 29" stroke="#fb3f12" strokeWidth="1.600" fill="none" />
        <path d="M14.500 34.500L21 31L27.500 34.500L21 39.500Z" fill="#fff" />
      </svg>
    </DockSlot>
    <DockSlot>
      <svg viewBox="0 0 42 42" className="h-[42px] w-[42px]">
        <path d="M31 0.500V12L6 32Q5 33 4 32L0.800 29Q0 28 1 27Z" fill="#0070b8" />
        <path d="M31 41.500V30L6 10Q5 9 4 10L0.800 13Q0 14 1 15Z" fill="#0a84cf" />
        <path d="M31 0.500L41 5Q42 5.500 42 7V35Q42 36.500 41 37L31 41.500Q29.500 41 31 38V4Q30 1 31 0.500Z" fill="#29a6f2" />
      </svg>
    </DockSlot>
    <DockSlot>
      <svg viewBox="0 0 42 42" className="h-[42px] w-[42px]" fill="none" stroke="#10151c" strokeLinecap="round">
        <circle cx="21" cy="21" r="21" fill="#1ed760" stroke="none" />
        <path d="M9 14.500Q22 10.500 34 17" strokeWidth="4" />
        <path d="M10 21.500Q21 18 31 24" strokeWidth="3.300" />
        <path d="M11 28Q21 25 28.500 30" strokeWidth="2.600" />
      </svg>
    </DockSlot>
    <div className="flex h-[3px] shrink-0 items-center pl-[11px]">
      <div className="h-px w-12 bg-[#3c4048]" />
    </div>
    <DockSlot active>
      <FreeCadMark className="h-[47px] w-[47px]" />
    </DockSlot>
    <DockSlot>
      <div className="relative flex h-[44px] w-[45px] items-center justify-center rounded-[5px] border border-[#7fd0c4] bg-gradient-to-b from-[#2b8f8f] to-[#5fd0bb] text-[26px] text-white">
        28
        <i className="absolute left-0 top-4 h-[10px] w-[2px] bg-white" />
        <i className="absolute right-0 top-4 h-[10px] w-[2px] bg-white" />
      </div>
    </DockSlot>
    <DockSlot dot={false}>
      <svg viewBox="0 0 38 44" className="h-[44px] w-[38px]">
        <rect x="0.500" y="0.500" width="37" height="43" rx="5" fill="#d2d2cf" stroke="#eee" />
        <path d="M4 8Q4 2 10 2H28Q34 2 34 8Z" fill="#fff" stroke="#777" />
        <g fill="none" stroke="#2a8a2a" strokeWidth="3.500">
          <path d="M15 23L18 19H21L23 23" />
          <path d="M26 27L27 31L25 34H21" />
          <path d="M17 34H13L11 31L13 27" />
        </g>
        <path d="M25 19V25H19.500ZM22 30V38L18 34ZM9 26H15.500L14 31Z" fill="#2a8a2a" />
      </svg>
    </DockSlot>
    <div className="flex-1" />
    <div className="mb-[23px] ml-5 grid w-[30px] grid-cols-3 gap-[6px]">
      {Array.from({ length: 9 }, (_, i) => (
        <i key={i} className="h-[6px] w-[6px] rounded-[1.5px] bg-[#f0f0f0]" />
      ))}
    </div>
  </div>
);

/* ---------- model tree ---------- */

type Row = { cells: string; open?: "r" | "d"; icon: string; label?: string; bold?: boolean; sel?: boolean };

const rows: Row[] = [
  { cells: "t", open: "r", icon: "doc", label: "extrusion_torsion" },
  { cells: "t", open: "r", icon: "doc", label: "chaflanes" },
  { cells: "l", open: "d", icon: "doc", label: "piezaArcos", bold: true },
  { cells: "et", open: "r", icon: "body", label: "Body", bold: true, sel: true },
  { cells: "el", open: "d", icon: "pg", label: "Page" },
  { cells: "eet", icon: "tpl", label: "Template" },
  { cells: "eet", open: "d", icon: "cube", label: "ProjGroup" },
  { cells: "eevt", icon: "front", label: "Front" },
  { cells: "eevt", icon: "bottom", label: "Bottom" },
  { cells: "eevt", icon: "top", label: "Top" },
  { cells: "eevt", icon: "left", label: "Left" },
  { cells: "eevl", icon: "right", label: "Right" },
  { cells: "eel", icon: "ann" },
];

const guide: Record<string, string> = {
  e: "",
  v: "M9.500 0V19",
  t: "M9.500 0V19M9.500 9.500H19",
  l: "M9.500 0V9.500H19",
};

const treeIcon = (k: string) => {
  if (k === "doc")
    return (
      <>
        <rect x="4" y="1.500" width="12" height="14.500" fill="#efefef" />
        <path d="M5.500 8L9 5.500L12.500 8V12.500L9 15L5.500 12.500Z" fill="#2e5da3" stroke="#132b52" />
        <path d="M10 3Q13 0.500 15 3V7L12.500 8L9.500 5.500Z" fill="#d21f1f" />
      </>
    );
  if (k === "body")
    return (
      <>
        <path d="M4.500 5L8.500 1.500L11.500 3V8.500L14 6.500L16 8V12L9.500 16L4.500 12.500Z" fill="#3f73b8" stroke="#14305c" />
        <path d="M4.500 5L7.500 6.500V11L9.500 12L16 8M9.500 12V16M7.500 6.500L11.500 3" stroke="#14305c" strokeWidth="0.800" fill="none" />
      </>
    );
  if (k === "pg") return <rect x="4.500" y="1.500" width="11" height="14.500" fill="#e6e6df" />;
  if (k === "tpl")
    return (
      <>
        <rect x="3" y="1.500" width="14" height="14" fill="#e9e9e4" />
        <rect x="4.500" y="3" width="11" height="11" fill="none" stroke="#777" strokeDasharray="1 1" />
        <path d="M8 12.500H15" stroke="#999" strokeWidth="2.500" />
      </>
    );
  if (k === "cube") return <TealCube x={1.5} y={0} s={0.7} />;
  if (k === "ann")
    return (
      <g transform="translate(2.500 1) scale(0.630)" fill="none">
        {icons.annot}
      </g>
    );
  return (
    <g transform="translate(2.500 1) scale(0.640)" fill="none">
      <Cube face={k} line="#9aa0a0" fill="#20d3d9" />
    </g>
  );
};

const Tree = () => (
  <div className="flex flex-col text-[14.5px] text-[#e6e6e6]">
    <div className="h-[16px] pl-[3px] leading-[16px]">Aplicación</div>
    {rows.map((r, i) => (
      <div key={i} className="flex h-[19px] items-center">
        {r.cells.split("").map((c, j, all) => (
          <svg key={j} viewBox="0 0 20 19" className="h-[19px] w-5 shrink-0" fill="none">
            <path d={guide[c]} stroke="#7d7d7d" strokeWidth="1" />
            {j === all.length - 1 && r.open === "r" && <path d="M7.500 5.500L11 9.500L7.500 13.500" stroke="#ddd" strokeWidth="1.800" />}
            {j === all.length - 1 && r.open === "d" && <path d="M5.500 8L9.500 11.500L13.500 8" stroke="#ddd" strokeWidth="1.800" />}
          </svg>
        ))}
        <div className={`flex h-full items-center ${r.sel ? "w-[133px] bg-[#e6e6ff]" : ""}`}>
          <svg viewBox="0 0 20 18" className="ml-[1px] h-[18px] w-5 shrink-0">
            {treeIcon(r.icon)}
          </svg>
          <span className={`ml-[4px] whitespace-nowrap ${r.bold ? "font-bold" : ""} ${r.sel ? "text-[#dedee6]" : ""}`}>{r.label}</span>
        </div>
      </div>
    ))}
  </div>
);

const TableHead = ({ a, b, w }: { a: string; b: string; w: string }) => (
  <div className="flex h-[29px] shrink-0 items-center bg-[#292929] pb-px text-[14.5px] text-[#d6d6d6]">
    <div className={`flex h-full items-center border-r border-[#4a4a4a] pl-[6px] ${w}`}>{a}</div>
    <div className="pl-[6px]">{b}</div>
  </div>
);

const SidePanel = () => (
  <div className="flex w-[546px] shrink-0 flex-col pt-1">
    <div className="ml-1 mr-1 flex h-[25px] shrink-0 items-center rounded-[3px] bg-[#393939] text-[14.5px] text-[#9c9c9c]">
      <span className="w-[512px] text-center">Vista combinada</span>
      <svg viewBox="0 0 32 14" className="-ml-[10px] h-[14px] w-8" fill="none">
        <path d="M1 5V1.500H4.500M1.500 2L4.500 5M8 1.500H11.500V5M11 2L8 5M1 9V12.500H4.500M1.500 12L4.500 9M11.500 9V12.500H8M11 12L8 9" stroke="#858585" strokeWidth="1.200" />
        <path d="M19.500 2L29 12M29 2L19.500 12" stroke="#999" strokeWidth="2" />
      </svg>
    </div>
    <div className="mt-1 flex h-[31px] shrink-0 text-[14.5px]">
      <div className="w-[10px] border-b border-[#858585]" />
      <div className="flex w-[96px] items-center justify-center border-x border-t-[4px] border-x-[#858585] border-t-[#4a80f0] pb-[3px] text-[#f2f2f2]">Modelo</div>
      <div className="flex flex-1 items-center border-b border-[#858585] pl-[30px] pt-[1px] text-[#939393]">Tareas</div>
    </div>
    <div className="mx-[6px] mt-[7px] flex h-[336px] shrink-0 flex-col rounded-[3px] border border-[#2f2f2f] bg-[#535353]">
      <TableHead a="Etiquetas & Atributos" b="Descripción" w="w-[173px]" />
      <Tree />
    </div>
    <div className="flex h-[23px] shrink-0 items-center justify-center pb-px">
      <i className="h-[2px] w-[38px] bg-[repeating-linear-gradient(to_right,#222_0_6px,transparent_6px_8px)]" />
    </div>
    <div className="mx-[6px] flex h-[367px] shrink-0 flex-col rounded-[3px] border border-[#2f2f2f] bg-[#535353]">
      <TableHead a="Propiedades" b="Valor" w="w-[100px]" />
    </div>
    <div className="mt-[5px] flex h-[31px] shrink-0 text-[14.5px]">
      <div className="flex w-[112px] items-center border-t border-[#858585] pl-[43px] text-[#939393]">Vista</div>
      <div className="flex w-[96px] items-center justify-center border-x border-b-[4px] border-x-[#858585] border-b-[#4a80f0] pt-1 text-[#f2f2f2]">Datos</div>
      <div className="flex-1 border-t border-[#858585]" />
    </div>
  </div>
);

/* ---------- technical drawing ---------- */

const Label = ({ x, y, w, size = 16, f = "Roboto", fw = 300, children }: P & { x: number; y: number; w: number; size?: number; f?: string; fw?: number }) => (
  <text x={x} y={y} textLength={w} lengthAdjust="spacingAndGlyphs" fontSize={size} fontFamily={`${f}, sans-serif`} fontWeight={fw} fill="#000">
    {children}
  </text>
);

const Field = ({ x, y, w, size = 12, children }: P & { x: number; y: number; w: number; size?: number }) => (
  <Label f="Noto Sans" fw={400} size={size} x={x} y={y} w={w}>
    {children}
  </Label>
);

const G = ({ children }: P) => <tspan fill="#138a13">{children}</tspan>;

const Zone = ({ x, y, t, turn = false }: { x: number; y: number; t: string; turn?: boolean }) => (
  <text x={x} y={y} fontSize="16" textAnchor="middle" fontFamily="Liberation Sans, sans-serif" fill="#000" dominantBaseline="central" transform={turn ? `rotate(-90 ${x} ${y})` : undefined}>
    {t}
  </text>
);

const Mono = ({ x, y, t }: { x: number; y: number; t: string }) => (
  <text x={x} y={y} fontSize="6.700" textLength={t.length * 4.04} fontFamily="Liberation Mono, monospace" fill="#000">
    {t}
  </text>
);

const Drawing = () => (
  <svg viewBox="626 207 1279 784" className="h-[784px] w-[1279px] shrink-0" fill="none">
    <rect x="820.500" y="343.500" width="938" height="700" fill="#fff" stroke="#000" />
    <g stroke="#000" strokeWidth="1">
      <path d="M852.500 373.500H1726.500V973.500H852.500Z" />
      <path d="M998 350V373M1143.500 350V373M1289.500 344V373M1434.500 350V373M1580.500 350V373" />
      <path d="M828 523.500H852M820 673.500H852M828 823.500H852M1726 523.500H1750M1726 673.500H1758M1726 823.500H1750" />
      <path d="M998 973V991M1143.500 973V991M1289.500 981V991M1435 981V991M1580.500 981V991" />
      <path d="M1252.500 981.500H1726M1252.500 973V989M1410.500 973V989M1568.500 973V989M1726.500 973V989" />
      <path d="M1284.500 973V981M1316 973V981M1347.500 973V981M1379 973V981M1442.500 973V981M1474 973V981M1505.500 973V981M1537 973V981M1600 973V981M1631.500 973V981M1663 973V981M1694.500 973V981" />
    </g>
    {"FEDCBA".split("").map((t, i) => (
      <Zone key={t} x={925 + i * 145.7} y={361} t={t} turn />
    ))}
    <Zone x={922} y={987} t="F" />
    <Zone x={1067.5} y={987} t="E" />
    <Zone x={1214} y={987} t="D" />
    {["4", "3", "2", "1"].map((t, i) => (
      <React.Fragment key={t}>
        <Zone x={836.5} y={449 + i * 149.8} t={t} turn />
        <Zone x={1738.5} y={448 + i * 149.8} t={t} />
      </React.Fragment>
    ))}

    <g stroke="#333" strokeDasharray="4 2">
      <path d="M1023.500 393.500H1251.500V518.500H1023.500Z" />
      <path d="M878 564.500H980.500V670.500H878Z" />
      <path d="M1023.500 561.500H1251.500V670.500H1023.500Z" />
      <path d="M1294 564.500H1396.500V670.500H1294Z" />
      <path d="M1023.500 715.500H1251.500V840.500H1023.500Z" />
    </g>
    <g stroke="#111" strokeWidth="1.200">
      <path d="M1025.500 395.500H1249V493.500H1025.500ZM1093.300 395.500V493.500M1180.700 395.500V493.500" />
      <path d="M1025.500 717.500H1249V815.500H1025.500ZM1078.300 717.500V815.500M1196.400 717.500V815.500" />
      <path d="M880.300 566.500H978.300V644.500H880.300ZM880.300 632H978.300" />
      <path d="M1296.300 566.500H1394.300V644.500H1296.300ZM1296.300 632H1394.300" />
      <path d="M1025.500 632H1078.300V625.500A59 59 0 0 1 1196.400 625.500V632H1249V644.500H1180.700V625.500A43.700 43.700 0 0 0 1093.300 625.500V644.500H1025.500Z" />
      <circle cx="1051.500" cy="444.500" r="12" />
      <circle cx="1222.500" cy="444.500" r="12" />
      <circle cx="1051.500" cy="766.500" r="12" />
      <circle cx="1222.500" cy="766.500" r="12" />
    </g>
    <Label x={1114} y={517} w={46}>Bottom</Label>
    <Label x={1119} y={668} w={36}>Front</Label>
    <Label x={911.5} y={668} w={35}>Right</Label>
    <Label x={1331} y={668} w={28}>Left</Label>
    <Label x={1126} y={839} w={22}>Top</Label>

    <g stroke="#000">
      <path d="M1284.500 826.500H1726M1284.500 826V973M1404.500 826V961M1660 826V973M1675.500 826V973M1340 879V961M1600.500 920V961" />
      <path d="M1284 879.500H1660M1284 920.500H1660M1284 961H1660" />
      <path d="M1660 847.500H1726M1660 868.500H1726M1660 889.500H1726M1660 910.500H1726M1660 931.500H1726M1660 952.500H1726" />
    </g>
    <g fontFamily="Liberation Sans, sans-serif" fontSize="11.500" fill="#000" textAnchor="middle">
      {"GFEDCBA".split("").map((t, i) => (
        <React.Fragment key={t}>
          <text x="1667.300" y={841 + i * 21.1}>{t}</text>
          <path d={`M1696 ${843.5 + i * 21}H1702`} stroke="#000" />
        </React.Fragment>
      ))}
    </g>
    <path
      fill="#7dff7d"
      d="M1286 839.500H1297V850.500H1286ZM1286 864.500H1297V875H1286ZM1406 832.500H1417.500V844H1406ZM1406 855H1417.500V866H1406ZM1306.500 936.500H1318V947H1306.500ZM1368 936.500H1379.500V947H1368ZM1405 936.500H1416V947H1405ZM1603 936.500H1614V947H1603Z"
    />
    <Mono x={1287.5} y={835} t="DESIGNED BY:" />
    <Mono x={1287.5} y={862} t="DATE:" />
    <Mono x={1287.5} y={886} t="SIZE" />
    <Mono x={1287.5} y={927} t="SCALE" />
    <Mono x={1343.5} y={927} t="WEIGHT (kg)" />
    <Mono x={1407.5} y={927} t="DRAWING NUMBER" />
    <Mono x={1603.5} y={927} t="SHEET" />
    <Field x={1286.5} y={849.5} w={103}>
      <G>D</G>esigned by Name
    </Field>
    <Field x={1286.5} y={874.5} w={26.5}>
      <G>D</G>ate
    </Field>
    <Field size={17.5} x={1407} y={843.5} w={36}>
      <G>T</G>itle
    </Field>
    <Field x={1407} y={866} w={43}>
      <G>Su</G>btitle
    </Field>
    <Field size={23.5} x={1297} y={909} w={29}>A4</Field>
    <Field x={1289} y={947} w={28.5}>
      Sca<G>le</G>
    </Field>
    <Field x={1345.5} y={947} w={39}>
      Wei<G>gh</G>t
    </Field>
    <Field x={1406} y={947} w={91.5}>
      <G>D</G>rawing number
    </Field>
    <Field x={1603.5} y={947} w={32}>
      <G>Sh</G>eet
    </Field>
    <Field size={7.8} x={1287.5} y={970} w={340}>This drawing is our property; it can't be reproduced or communicated without our written consent.</Field>
    <path d="M1446.500 821.500H1554.500V873.500H1446.500Z" stroke="#222" strokeDasharray="4 2" />
    <text y={844} fontSize="16" fontFamily="Roboto, sans-serif" fontWeight="300" fill="#000">
      <tspan x={1448.5} textLength={50.5} lengthAdjust="spacingAndGlyphs">Primera</tspan>
      <tspan x={1506} textLength={46.5} lengthAdjust="spacingAndGlyphs">Prueba</tspan>
    </text>
    <path d="M1619.500 882.500H1639.500V889.500H1627V896H1634V902H1627V914H1619.500Z" fill="#f8380e" stroke="#5a0d00" />
    <path d={gearPath(1643, 902.5, 10, 14.3, 8)} fill="#1f4fae" stroke="#0a1f55" />
    <circle cx="1643" cy="902.500" r="5" fill="#fff" stroke="#0a1f55" />
  </svg>
);

const tabs: [string, string, string][] = [
  ["Página de inicio", "w-[175px]", "tracking-[-0.1px]"],
  ["extrusion_torsion : 1*", "w-[216px]", "tracking-[-0.05px]"],
  ["chaflanes : 1", "w-[151px]", "tracking-[-0.15px]"],
  ["piezaArcos : 1*", "w-[171px]", "tracking-[-0.1px]"],
];

const Cross = () => (
  <svg viewBox="0 0 10 10" className="h-[10px] w-[10px]">
    <path d="M1 1L9 9M9 1L1 9" stroke="#262626" strokeWidth="1.800" />
  </svg>
);

const Arrow = ({ d }: { d: string }) => (
  <svg viewBox="0 0 10 10" className="h-[10px] w-[10px]" fill="none">
    <path d={d} stroke="#ddd" strokeWidth="2" />
  </svg>
);

const Workspace = () => (
  <div className="flex min-w-0 flex-1 flex-col">
    <div className="flex h-[784px] shrink-0">
      <div className="w-[1279px] overflow-hidden bg-[#707070]">
        <Drawing />
      </div>
      <div className="flex w-[15px] flex-col items-center">
        <div>
          <Arrow d="M1 7L5 3.500L9 7" />
        </div>
        <div className="mt-[213px] h-[278px] w-[7px] rounded-full bg-[#7f7f7f]" />
        <div className="mb-[2px] mt-auto">
          <Arrow d="M1 3L5 6.500L9 3" />
        </div>
      </div>
    </div>
    <div className="flex h-[15px] w-[1279px] shrink-0 items-center">
      <div className="ml-[2px]">
        <Arrow d="M6.500 1L3 5L6.500 9" />
      </div>
      <div className="ml-[341px] h-[7px] w-[552px] rounded-full bg-[#7f7f7f]" />
      <div className="ml-auto mr-[1px]">
        <Arrow d="M3 1L6.500 5L3 9" />
      </div>
    </div>
    <div className="flex h-[34px] shrink-0 text-[14.4px] text-[#969696]">
      {tabs.map(([t, w, tr], i) => (
        <div key={i} className={`flex shrink-0 items-center border-t border-[#858585] pl-[6px] ${w}`}>
          <FreeCadMark className="h-[16px] w-[16px]" red="#ef1c1c" edge="#8a0c0c" />
          <span className={`ml-[10px] whitespace-nowrap ${tr}`}>{t}</span>
          <div className="ml-auto mr-[11px]">
            <Cross />
          </div>
        </div>
      ))}
      <div className="flex w-[104px] items-center border-x border-b-[4px] border-x-[#858585] border-b-[#4a80f0] pl-[5px] pt-[4px] text-[#f2f2f2]">
        <i className="-mt-[3px] h-[15px] w-[11px] bg-[#e4e6e0]" />
        <span className="ml-[12px]">Page*</span>
        <div className="ml-auto mr-[9px]">
          <Cross />
        </div>
      </div>
      <div className="flex-1 border-t border-[#858585]" />
    </div>
  </div>
);

/* ---------- window ---------- */

const WinBtn = ({ d }: { d: string }) => (
  <div className="flex h-[22px] w-[22px] items-center justify-center rounded-full bg-[#373737]">
    <svg viewBox="0 0 12 12" className="h-3 w-3" fill="none">
      <path d={d} stroke="#fff" strokeWidth="1.200" />
    </svg>
  </div>
);

export default function App() {
  return (
    <div className="flex h-[1080px] w-[1920px] flex-col overflow-hidden bg-[#434343] font-['Noto_Sans',sans-serif]">
      <div className="grid h-[27px] shrink-0 grid-cols-[1fr_auto_1fr] items-center bg-[#131313] text-[14.4px] text-[#f0f0f0]">
        <div className="flex items-center pl-[18px]">
          <span className="w-[99px] text-[14.8px]">Activities</span>
          <FreeCadMark className="h-[15px] w-[15px]" red="#5c5c5c" blue="#8a8a8a" edge="#3a3a3a" />
          <span className="ml-[7px]">FreeCAD</span>
        </div>
        <span className="pl-[70px] text-[13.8px]">nov 12&nbsp; 13:25</span>
        <div className="flex items-center justify-end gap-[13px] pr-[19px]">
          <svg viewBox="0 0 16 14" className="h-[14px] w-4">
            <path d="M0.500 4Q8 -2 15.500 4L8 13Z" fill="#f2f2f2" />
            <path d="M2.500 5.500Q8 1.500 13.500 5.500" stroke="#131313" fill="none" />
          </svg>
          <svg viewBox="0 0 16 14" className="h-[14px] w-4" fill="none">
            <path d="M1 4.500H4L8 0.500V13.500L4 9.500H1Z" fill="#f2f2f2" />
            <path d="M10 4.500Q12 7 10 9.500M12 2Q16 7 12 12" stroke="#777" strokeWidth="1.200" />
          </svg>
          <svg viewBox="0 0 12 16" className="h-4 w-3" fill="none">
            <rect x="1.500" y="2.500" width="9" height="12.500" rx="1.500" stroke="#f2f2f2" strokeWidth="1.300" />
            <path d="M4 1H8M3.500 4.500H8.500V13H3.500Z" stroke="#f2f2f2" strokeWidth="1" fill="#f2f2f2" />
          </svg>
        </div>
      </div>
      <div className="flex min-h-0 flex-1">
        <Dock />
        <div className="flex min-w-0 flex-1 flex-col">
          <div className="grid h-[37px] shrink-0 grid-cols-[1fr_auto_1fr] items-center border-b border-t border-b-[#161616] border-t-[#303030] bg-[#222]">
            <span />
            <span className="text-[14.8px] font-bold text-[#f4f4f4]">FreeCAD 0.19</span>
            <div className="flex justify-end gap-3 pr-[7px]">
              <WinBtn d="M2 8.500H10" />
              <WinBtn d="M2.500 4H7.500V9.500H2.500ZM5 1.800H10V7" />
              <WinBtn d="M2.500 2.500L9.500 9.500M9.500 2.500L2.500 9.500" />
            </div>
          </div>
          <Toolbars />
          <div className="flex shrink-0">
            <SidePanel />
            <div className="flex w-[10px] shrink-0 flex-col items-center">
              <i className="mt-[397px] h-[38px] w-[2px] bg-[repeating-linear-gradient(to_bottom,#222_0_6px,transparent_6px_8px)]" />
            </div>
            <Workspace />
          </div>
          <div className="flex flex-1 items-center justify-end text-[14.5px]">
            <div className="mt-[1px] flex h-[27px] w-[120px] items-center rounded-[4px] border border-[#252525] bg-[#2f2f2f] pl-[42px] text-[#cfcfcf]">Blender</div>
            <span className="ml-[10px] mt-[1px] w-[158px] whitespace-nowrap tracking-[-0.05px] text-[#f0f0f0]">109,16 mm x 81,87 mm</span>
          </div>
        </div>
      </div>
    </div>
  );
}
